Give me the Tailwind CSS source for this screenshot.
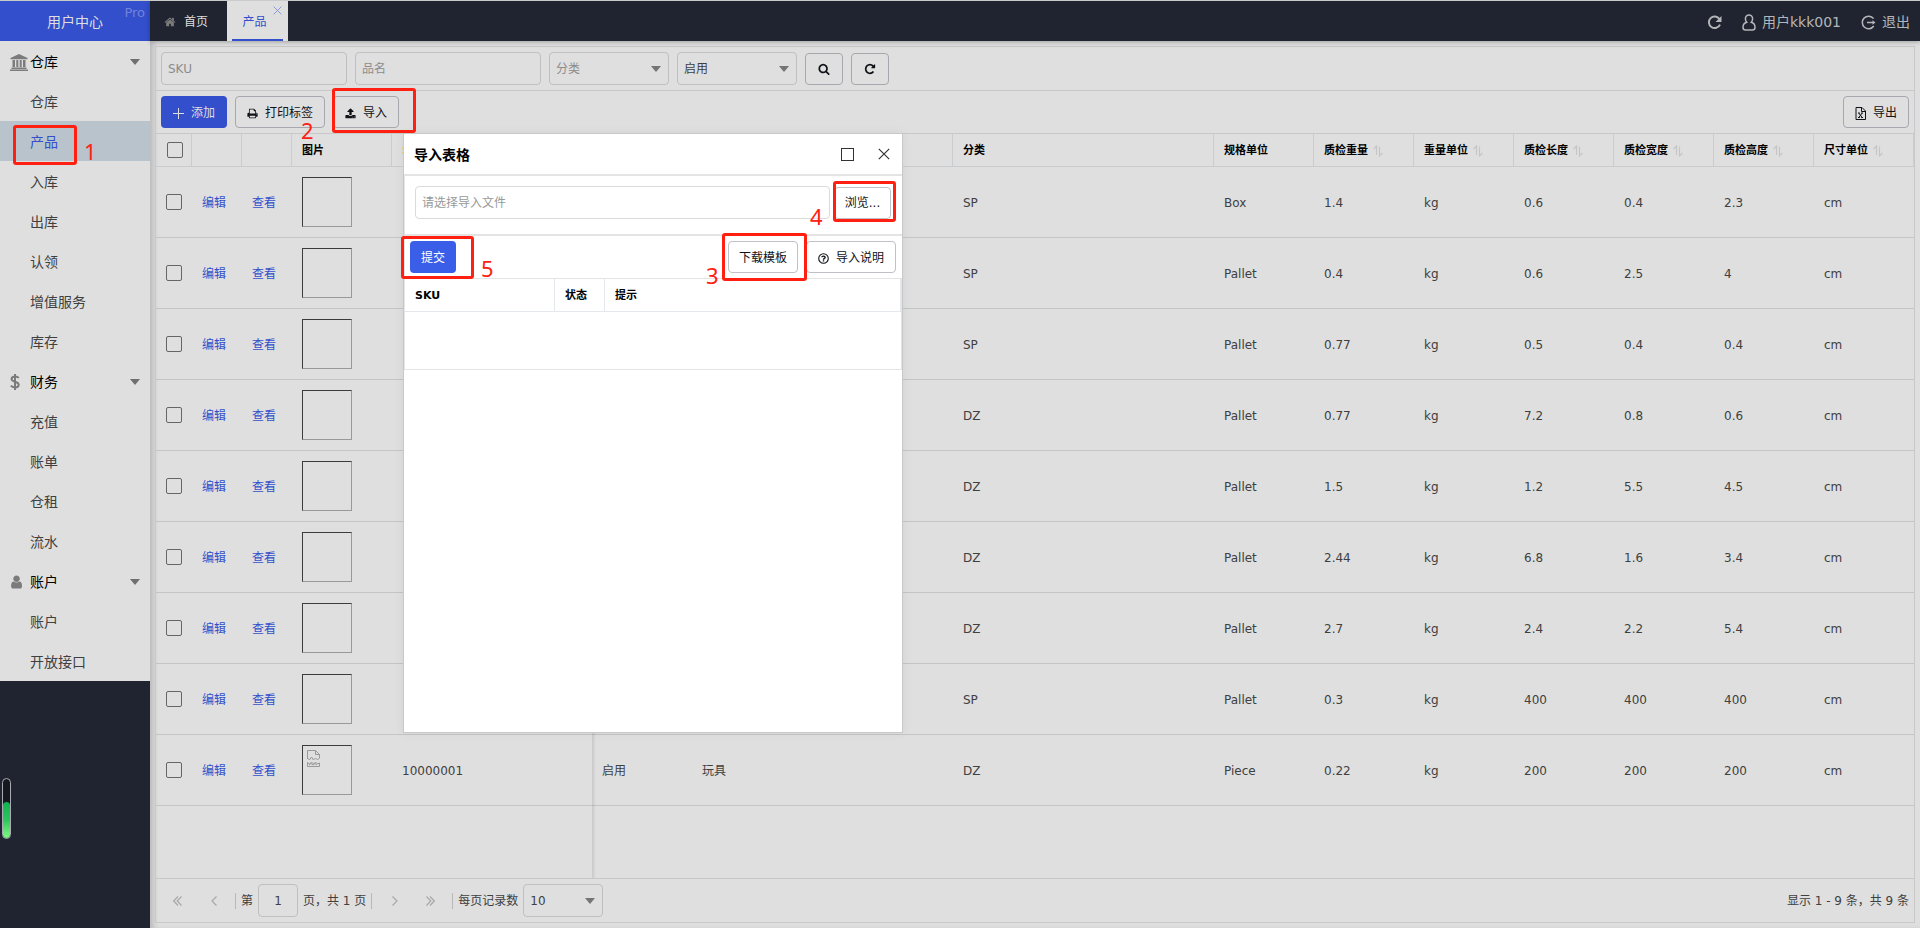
<!DOCTYPE html>
<html lang="zh-CN">
<head>
<meta charset="utf-8">
<title>用户中心 Pro - 产品</title>
<script src="https://cdn.jsdelivr.net/npm/@tailwindcss/browser@4"></script>
</head>
<body class="relative flex h-screen min-h-[928px] flex-col overflow-hidden border-t border-[#c8cbca] bg-[#dfdfdf] font-['DejaVu_Sans','Noto_Sans_CJK_SC',sans-serif] text-xs text-[#404040]">

<!-- icon sprite -->
<svg class="hidden" aria-hidden="true">
  <symbol id="home" viewBox="0 0 1792 1792"><path fill="currentColor" d="M1472 992v480q0 26-19 45t-45 19h-384v-384h-256v384h-384q-26 0-45-19t-19-45v-480q0-1 .5-3t.5-3l575-474 575 474q1 2 1 6zm223-69l-62 74q-8 9-21 11h-3q-13 0-21-7l-692-577-692 577q-12 8-24 7-13-2-21-11l-62-74q-8-10-7-23.500t11-21.500l719-599q32-26 76-26t76 26l244 204v-195q0-14 9-23t23-9h192q14 0 23 9t9 23v408l219 182q10 8 11 21.500t-7 23.500z"/></symbol>
  <symbol id="search" viewBox="0 0 1792 1792"><path fill="currentColor" d="M1216 832q0-185-131.500-316.500t-316.500-131.500-316.500 131.500-131.500 316.500 131.500 316.500 316.500 131.500 316.500-131.500 131.500-316.500zm512 832q0 52-38 90t-90 38q-54 0-90-38l-343-342q-179 124-399 124-143 0-273.500-55.500t-225-150-150-225-55.500-273.500 55.500-273.500 150-225 225-150 273.500-55.500 273.500 55.500 225 150 150 225 55.500 273.500q0 220-124 399l343 343q37 37 37 90z"/></symbol>
  <symbol id="repeat" viewBox="0 0 1792 1792"><path fill="currentColor" d="M1664 256v448q0 26-19 45t-45 19h-448q-42 0-59-40-17-39 14-69l138-138q-148-137-349-137-104 0-198.500 40.500t-163.500 109.500-109.500 163.500-40.500 198.500 40.500 198.500 109.500 163.500 163.500 109.500 198.500 40.500q119 0 225-52t179-147q7-10 23-12 15 0 25 9l137 138q9 8 9.500 20.500t-7.500 22.500q-109 132-264 204.500t-327 72.500q-156 0-298-61t-245-164-164-245-61-298 61-298 164-245 245-164 298-61q147 0 284.500 55.500t244.500 156.500l130-129q29-31 70-14 39 17 39 59z"/></symbol>
  <symbol id="upload" viewBox="0 0 1792 1792"><path fill="currentColor" d="M1344 1472q0-26-19-45t-45-19-45 19-19 45 19 45 45 19 45-19 19-45zm256 0q0-26-19-45t-45-19-45 19-19 45 19 45 45 19 45-19 19-45zm128-224v320q0 40-28 68t-68 28h-1472q-40 0-68-28t-28-68v-320q0-40 28-68t68-28h427q21 56 70.500 92t110.500 36h256q61 0 110.500-36t70.500-92h427q40 0 68 28t28 68zm-325-648q-17 40-59 40h-256v448q0 26-19 45t-45 19h-256q-26 0-45-19t-19-45v-448h-256q-42 0-59-40-17-39 14-69l448-448q18-19 45-19t45 19l448 448q31 30 14 69z"/></symbol>
  <symbol id="print" viewBox="0 0 1792 1792"><path fill="currentColor" d="M448 1536h896v-256h-896v256zm0-640h896v-384h-160q-40 0-68-28t-28-68v-160h-640v640zm1152 64q0-26-19-45t-45-19-45 19-19 45 19 45 45 19 45-19 19-45zm128 0v416q0 13-9.500 22.500t-22.500 9.500h-224v160q0 40-28 68t-68 28h-960q-40 0-68-28t-28-68v-160h-224q-13 0-22.500-9.500t-9.500-22.500v-416q0-79 56.500-135.500t135.500-56.500h64v-544q0-40 28-68t68-28h672q40 0 88 20t76 48l152 152q28 28 48 76t20 88v256h64q79 0 135.500 56.500t56.500 135.500z"/></symbol>
  <symbol id="user" viewBox="128 128 1408 1536"><path fill="currentColor" d="M1536 1399q0 109-62.500 187t-150.500 78h-854q-88 0-150.500-78t-62.500-187q0-85 8.500-160.500t31.500-152 58.500-131 94-89 134.500-34.500q131 128 313 128t313-128q76 0 134.500 34.500t94 89 58.500 131 31.500 152 8.500 160.500zm-256-887q0 159-112.500 271.500t-271.500 112.500-271.500-112.500-112.500-271.500 112.500-271.500 271.500-112.500 271.500 112.500 112.500 271.500z"/></symbol>
  <symbol id="bank" viewBox="0 0 18 17"><path fill="currentColor" d="M9 0 17.500 4v1.300H.500V4zM2.500 6H5v7H2.500zM6.300 6h2v7h-2zM9.700 6h2v7h-2zM13 6h2.500v7H13zM1.500 13.500h15V15h-15zM0 15.600h18V17H0z"/></symbol>
  <symbol id="dollar" viewBox="0 0 10 16"><path fill="none" stroke="currentColor" stroke-width="2" d="M5 0v16M8.800 4C8 3 6.500 2.600 5 2.600 3 2.600 1.600 3.600 1.600 5.100 1.600 8.500 8.700 7 8.700 10.700c0 1.700-1.600 2.700-3.700 2.700-1.700 0-3.200-.6-4.200-1.700"/></symbol>
  <symbol id="person" viewBox="0 0 14 17"><path fill="none" stroke="currentColor" stroke-width="1.500" d="M7 1a3.600 3.600 0 0 0-3.600 3.700c0 1.500.5 2.800 1.300 3.600C2.300 9 1 11 1 13.500c0 1.600 1 2.500 2.500 2.500h7c1.500 0 2.500-.9 2.500-2.500 0-2.500-1.300-4.500-3.700-5.200.8-.8 1.300-2.100 1.300-3.600A3.600 3.600 0 0 0 7 1z"/></symbol>
  <symbol id="exit" viewBox="0 0 15 15"><path fill="none" stroke="currentColor" stroke-width="1.500" d="M12.600 3.600A6.300 6.300 0 1 0 12.800 11M6 7.500h7"/><path fill="currentColor" d="M11.500 5.200 14.500 7.500l-3 2.300z"/></symbol>
  <symbol id="reload" viewBox="0 0 15 15"><path fill="none" stroke="currentColor" stroke-width="2" d="M12.500 4A5.800 5.800 0 1 0 13 9.600"/><path fill="currentColor" d="M14.500 1v6H8.500z"/></symbol>
  <symbol id="sort" viewBox="0 0 10 12"><path fill="none" stroke="currentColor" stroke-width="1.200" d="M3.500 10V1L.5 4M6.500 1.500V11l3-3"/></symbol>
  <symbol id="plus" viewBox="0 0 11 11"><path fill="none" stroke="currentColor" d="M5.500 0v11M0 5.500h11"/></symbol>
  <symbol id="cross" viewBox="0 0 12 12"><path fill="none" stroke="currentColor" stroke-width="1.200" d="m.8.800 10.400 10.400M11.200.8.800 11.200"/></symbol>
  <symbol id="excel" viewBox="0 0 11 13"><path fill="none" stroke="currentColor" d="M1 .5h6L10.500 4v8.500H1zM6.500.500V4.500h4M3.800 6l3.400 4.500M7.200 6 3.800 10.500M3 6h1.800M6.200 6H8M3 10.500h1.800M6.200 10.500H8"/></symbol>
  <symbol id="help" viewBox="0 0 12 12"><circle cx="6" cy="6" r="5.200" fill="none" stroke="currentColor" stroke-width="1.200"/><path fill="none" stroke="currentColor" stroke-width="1.500" d="M4.200 4.700C4.300 3 7.800 3 7.800 4.800 7.800 6 6 5.900 6 7.300M6 8v1.300"/></symbol>
  <symbol id="broken" viewBox="0 0 13 17"><path fill="none" stroke="currentColor" d="M.500 9V.500h8l4 4V8M8.500.500v4h4M.500 8l2 2 2-3 2 3 2-2 2 2 2-2M.500 16.500v-4l2 1.500 2-2 2 2 2-2 2 2 2-1v3.500zM2 15l2-1.500L6 15l2-1.500 2 1.500"/></symbol>
  <symbol id="prev" viewBox="0 0 6 10"><path fill="none" stroke="currentColor" stroke-width="1.200" d="M5.500.500 1 5l4.500 4.500"/></symbol>
  <symbol id="first" viewBox="0 0 9 10"><path fill="none" stroke="currentColor" stroke-width="1.200" d="M5 .500.700 5 5 9.500M8.500.500 4.200 5l4.300 4.500"/></symbol>
  <symbol id="down" viewBox="0 0 10 6"><path fill="currentColor" d="M0 0h10L5 6z"/></symbol>
</svg>

<div class="flex min-h-0 flex-1">
  <aside class="flex w-[150px] shrink-0 flex-col bg-[#1f2430]">
    <div class="relative flex h-10 shrink-0 items-center justify-center bg-[#334fcb] pt-0.5 text-sm text-[#dfdfdf]">
      <span>用户中心</span>
      <span class="absolute top-1 right-[5px] text-[13px] leading-4 text-[#7183dc]">Pro</span>
    </div>
    <nav id="nav" class="flex flex-col bg-[#dfdfdf] text-sm" aria-label="主菜单"></nav>
  </aside>

  <div class="flex min-w-0 flex-1 flex-col">
    <header class="z-10 flex h-10 shrink-0 items-stretch bg-[#1f2430] shadow-[0_1px_5px_rgba(0,0,0,0.25)]">
      <a href="#" class="flex w-[77px] items-center gap-2 pt-0.5 pl-[14px] text-[#dfdfdf]"><svg class="size-3 text-[#7b7b7b]"><use href="#home"/></svg>首页</a>
      <div class="relative flex w-[61px] bg-[#dfdfdf] px-[5px]">
        <a href="#" class="flex flex-1 items-center justify-center border-b-2 border-[#334fcb] pt-1 pr-1.5 text-[#334fcb]">产品</a>
        <button aria-label="关闭" class="absolute top-[5px] right-[6px] text-[#8492d6]"><svg class="size-[9px]"><use href="#cross"/></svg></button>
      </div>
      <div class="ml-auto flex items-center gap-5 pt-0.5 pr-[10px] text-sm text-[#b4b6b9]">
        <button aria-label="刷新"><svg class="size-[15px]"><use href="#reload"/></svg></button>
        <a href="#" class="flex items-center gap-1.5"><svg class="h-[17px] w-[14px]"><use href="#person"/></svg>用户kkk001</a>
        <a href="#" class="flex items-center gap-1.5"><svg class="size-[15px]"><use href="#exit"/></svg>退出</a>
      </div>
    </header>

    <main class="flex min-h-0 flex-1 flex-col bg-[#dfdfdf] p-[5px] shadow-[inset_6px_0_6px_-3px_rgba(0,0,0,0.18)]">
      <div class="flex min-h-0 flex-1 flex-col border border-[#c8c8c8]">
        <form class="flex h-11 shrink-0 items-center gap-2 border-b border-[#c8c8c8] px-[5px]" onsubmit="return false">
          <input aria-label="SKU" placeholder="SKU" class="h-[33px] w-[186px] rounded-[4px] border border-[#bfbfbf] px-1.5 placeholder:text-[#8c8c8c]">
          <input aria-label="品名" placeholder="品名" class="h-[33px] w-[186px] rounded-[4px] border border-[#bfbfbf] px-1.5 placeholder:text-[#8c8c8c]">
          <div class="relative">
            <select aria-label="分类" class="h-[33px] w-[120px] appearance-none rounded-[4px] border border-[#bfbfbf] px-1.5 text-[#8c8c8c]"><option>分类</option></select>
            <svg class="pointer-events-none absolute top-[14px] right-2 h-1.5 w-2.5 text-[#757575]"><use href="#down"/></svg>
          </div>
          <div class="relative">
            <select aria-label="状态" class="h-[33px] w-[120px] appearance-none rounded-[4px] border border-[#bfbfbf] px-1.5"><option>启用</option></select>
            <svg class="pointer-events-none absolute top-[14px] right-2 h-1.5 w-2.5 text-[#757575]"><use href="#down"/></svg>
          </div>
          <button aria-label="搜索" class="flex h-8 w-[38px] items-center justify-center rounded-[4px] border border-[#a6a8ad] text-[#101218]"><svg class="size-3"><use href="#search"/></svg></button>
          <button aria-label="重置" class="flex h-8 w-[38px] items-center justify-center rounded-[4px] border border-[#a6a8ad] text-[#101218]"><svg class="size-3"><use href="#repeat"/></svg></button>
        </form>
        <div class="flex h-[43px] shrink-0 items-center gap-2 border-b border-[#c8c8c8] px-[5px] text-[#101218]">
          <button class="flex h-8 w-[66px] items-center justify-center gap-[7px] rounded-[4px] bg-[#334fcb] pt-0.5 text-[#dfdfdf]"><svg class="size-[11px]"><use href="#plus"/></svg>添加</button>
          <button class="flex h-8 w-[90px] items-center justify-center gap-[7px] rounded-[4px] border border-[#a6a8ad] pt-0.5"><svg class="size-[11px]"><use href="#print"/></svg>打印标签</button>
          <button class="flex h-8 w-[66px] items-center justify-center gap-[7px] rounded-[4px] border border-[#a6a8ad] pt-0.5"><svg class="size-[11px]"><use href="#upload"/></svg>导入</button>
          <button class="ml-auto flex h-8 w-[66px] items-center justify-center gap-[7px] rounded-[4px] border border-[#a6a8ad] pt-0.5"><svg class="h-[13px] w-[11px]"><use href="#excel"/></svg>导出</button>
        </div>

        <div class="relative min-h-0 flex-1 overflow-hidden">
          <table class="w-full table-fixed border-separate border-spacing-0 text-left">
            <colgroup>
              <col class="w-[36px]"><col class="w-[50px]"><col class="w-[50px]"><col class="w-[100px]"><col class="w-[200px]"><col class="w-[100px]"><col><col>
              <col class="w-[100px]"><col class="w-[100px]"><col class="w-[100px]"><col class="w-[100px]"><col class="w-[100px]"><col class="w-[100px]"><col class="w-[100px]">
            </colgroup>
            <thead><tr id="head"></tr></thead>
            <tbody id="rows"></tbody>
          </table>
          <!-- edge of the frozen columns -->
          <div class="absolute inset-y-0 left-[436px] w-1 bg-linear-to-r from-black/10 to-transparent"></div>
        </div>

        <footer class="flex h-11 shrink-0 items-center justify-between border-t border-[#c8c8c8] pr-[5px] pl-[17px]">
          <div class="flex items-center">
            <button aria-label="首页" class="flex w-[38px] text-[#a8a8a8]"><svg class="h-2.5 w-[9px]"><use href="#first"/></svg></button>
            <button aria-label="上一页" class="flex w-6 text-[#a8a8a8]"><svg class="h-2.5 w-1.5"><use href="#prev"/></svg></button>
            <label class="flex h-4 items-center gap-[5px] border-l border-[#b8b8b8] pl-[5px]">第
              <input value="1" class="h-[33px] w-10 rounded-[4px] border border-[#bfbfbf] text-center"></label>
            <span class="flex h-4 items-center border-r border-[#b8b8b8] px-[5px] whitespace-nowrap">页，共 1 页</span>
            <button aria-label="下一页" class="flex w-[54px] pl-5 text-[#a8a8a8]"><svg class="h-2.5 w-1.5 rotate-180"><use href="#prev"/></svg></button>
            <button aria-label="末页" class="flex w-[26px] text-[#a8a8a8]"><svg class="h-2.5 w-[9px] rotate-180"><use href="#first"/></svg></button>
            <label for="size" class="flex h-4 items-center border-l border-[#b8b8b8] px-[5px]">每页记录数</label>
            <div class="relative">
              <select id="size" class="h-[33px] w-20 appearance-none rounded-[4px] border border-[#bfbfbf] px-1.5"><option>10</option></select>
              <svg class="pointer-events-none absolute top-[14px] right-2 h-1.5 w-2.5 text-[#757575]"><use href="#down"/></svg>
            </div>
          </div>
          <span>显示 1 - 9 条，共 9 条</span>
        </footer>
      </div>
    </main>
  </div>
</div>

<!-- floating level gauge -->
<div class="absolute top-[777px] left-[2px] flex h-[61px] w-[9px] flex-col justify-end overflow-hidden rounded-full border border-[#a9adb3] bg-[#15181f]">
  <div class="h-9 rounded-full bg-linear-to-b from-[#12b153] via-[#2bc55c] to-[#7dfb84]"></div>
</div>

<!-- import dialog -->
<section role="dialog" aria-label="导入表格" class="absolute top-[132px] left-[403px] z-20 flex h-[600px] w-[500px] flex-col border border-[#c8c8c8] bg-white text-[#101218] shadow-[0_0_10px_rgba(0,0,0,0.06)]">
  <div class="flex h-[42px] shrink-0 items-center border-b-2 border-[#e4e4e4] pr-3 pl-[10px]">
    <h2 class="flex-1 pt-0.5 text-sm font-bold text-black">导入表格</h2>
    <button aria-label="最大化" class="mr-6 size-[13px] border border-[#333333]"></button>
    <button aria-label="关闭" class="text-[#333333]"><svg class="size-3"><use href="#cross"/></svg></button>
  </div>
  <div class="flex h-[60px] shrink-0 items-start gap-1 border-b-2 border-l border-[#e4e4e4] pt-[10px] pr-[11px] pl-[10px]">
    <input aria-label="导入文件" placeholder="请选择导入文件" class="h-[33px] min-w-0 flex-1 rounded-[4px] border border-[#dadada] px-1.5 placeholder:text-[#999999]">
    <button class="mt-px h-8 w-[57px] rounded-[4px] border border-[#bfc1c6]">浏览...</button>
  </div>
  <div class="flex h-[43px] shrink-0 items-center gap-2 border-b border-l border-[#e4e4e4] pr-1.5 pl-[5px]">
    <button class="h-8 w-[46px] rounded-[4px] bg-[#3b5ee8] pt-0.5 text-white">提交</button>
    <button class="ml-auto h-8 w-[70px] rounded-[4px] border border-[#bfc1c6] pt-0.5">下载模板</button>
    <button class="flex h-8 w-[90px] items-center justify-center gap-[7px] rounded-[4px] border border-[#bfc1c6] pt-0.5"><svg class="size-[11px]"><use href="#help"/></svg>导入说明</button>
  </div>
  <div class="h-[91px] shrink-0 border-x border-b border-[#e4e4e4]">
    <table class="w-full table-fixed border-separate border-spacing-0 text-left text-[11px] text-black">
      <colgroup><col class="w-[150px]"><col class="w-[50px]"><col></colgroup>
      <thead><tr>
        <th class="h-[33px] border-r border-b border-[#e4e8ec] pt-0.5 pl-[10px]">SKU</th>
        <th class="h-[33px] border-r border-b border-[#e4e8ec] pt-0.5 pl-[10px]">状态</th>
        <th class="h-[33px] border-r border-b border-[#e4e8ec] pt-0.5 pl-[10px]">提示</th>
      </tr></thead>
    </table>
  </div>
</section>

<!-- step markers -->
<div class="pointer-events-none absolute inset-0 z-30 font-['Noto_Sans',sans-serif] text-[22px] leading-6 text-[#ff2012]">
  <div class="absolute top-[124px] left-[13px] h-10 w-16 rounded-[3px] border-3 border-[#ff2012]"></div>
  <span class="absolute top-[138px] left-[84px]">1</span>
  <div class="absolute top-[87px] left-[332px] h-[45px] w-[84px] rounded-[3px] border-3 border-[#ff2012]"></div>
  <span class="absolute top-[117px] left-[301px]">2</span>
  <div class="absolute top-[232px] left-[722px] h-12 w-[85px] rounded-[3px] border-3 border-[#ff2012]"></div>
  <span class="absolute top-[262px] left-[706px]">3</span>
  <div class="absolute top-[180px] left-[833px] h-[41px] w-[63px] rounded-[3px] border-3 border-[#ff2012]"></div>
  <span class="absolute top-[203px] left-[810px]">4</span>
  <div class="absolute top-[235px] left-[401px] h-[43px] w-[73px] rounded-[3px] border-3 border-[#ff2012]"></div>
  <span class="absolute top-[255px] left-[481px]">5</span>
</div>

<script>
const menu = [
  ['仓库', 'bank', ['仓库', '产品', '入库', '出库', '认领', '增值服务', '库存']],
  ['财务', 'dollar', ['充值', '账单', '仓租', '流水']],
  ['账户', 'user', ['账户', '开放接口']]
];
const iconClass = { bank: 'h-[17px] w-[18px]', dollar: 'h-4 w-[10px]', user: 'h-[14px] w-3' };
document.getElementById('nav').innerHTML = menu.map(([title, icon, items]) =>
  `<button class="flex h-10 items-center px-[10px] pt-0.5 text-black"><span class="flex w-5 shrink-0 text-[#7b7b7b]"><svg class="${iconClass[icon]}"><use href="#${icon}"/></svg></span><span class="flex-1 text-left">${title}</span><svg class="h-1.5 w-2.5 text-[#6f6f6f]"><use href="#down"/></svg></button>` +
  items.map(t => t === '产品'
    ? `<a href="#" class="flex h-10 items-center bg-[#b8c3cc] pt-0.5 pl-[30px] text-[#334fcb]">${t}</a>`
    : `<a href="#" class="flex h-10 items-center pt-0.5 pl-[30px] text-[#404040]">${t}</a>`).join('')
).join('');

const box = '<input type="checkbox" aria-label="选择" class="block size-4 appearance-none rounded-[2px] border border-[#666666]">';
const heads = ['', '', '图片', 'SKU', '状态', '品名', '分类', '规格单位', '质检重量↕', '重量单位↕', '质检长度↕', '质检宽度↕', '质检高度↕', '尺寸单位↕'];
document.getElementById('head').innerHTML =
  `<th class="h-[33px] border-r border-b border-[#cacdd0] pl-[11px]">${box}</th>` +
  heads.map(h => `<th class="h-[33px] border-r border-b border-[#cacdd0] pt-0.5 pl-[10px] text-[11px] ${h === 'SKU' ? 'text-[#e08a1e]' : 'text-black'}"><span class="flex items-center gap-[5px]">${h.replace('↕', '')}${h.includes('↕') ? '<svg class="h-3 w-2.5 text-[#c6c6c6]"><use href="#sort"/></svg>' : ''}</span></th>`).join('');

const data = [
  ['', '', '', 'SP', 'Box', '1.4', 'kg', '0.6', '0.4', '2.3', 'cm'],
  ['', '', '', 'SP', 'Pallet', '0.4', 'kg', '0.6', '2.5', '4', 'cm'],
  ['', '', '', 'SP', 'Pallet', '0.77', 'kg', '0.5', '0.4', '0.4', 'cm'],
  ['', '', '', 'DZ', 'Pallet', '0.77', 'kg', '7.2', '0.8', '0.6', 'cm'],
  ['', '', '', 'DZ', 'Pallet', '1.5', 'kg', '1.2', '5.5', '4.5', 'cm'],
  ['', '', '', 'DZ', 'Pallet', '2.44', 'kg', '6.8', '1.6', '3.4', 'cm'],
  ['', '', '', 'DZ', 'Pallet', '2.7', 'kg', '2.4', '2.2', '5.4', 'cm'],
  ['', '', '', 'SP', 'Pallet', '0.3', 'kg', '400', '400', '400', 'cm'],
  ['10000001', '启用', '玩具', 'DZ', 'Piece', '0.22', 'kg', '200', '200', '200', 'cm']
];
const td = (html) => `<td class="h-[71px] border-b border-[#c4c4c4] pt-0.5 pl-[10px]">${html}</td>`;
document.getElementById('rows').innerHTML = data.map(r =>
  '<tr>' + `<td class="h-[71px] border-b border-[#c4c4c4] pl-[10px]">${box}</td>` +
  td('<a href="#" class="text-[#334fcb]">编辑</a>') + td('<a href="#" class="text-[#334fcb]">查看</a>') +
  `<td class="h-[71px] border-b border-[#c4c4c4] pl-[10px]"><div class="size-[50px] border border-t-[#3c3c3c] border-r-[#999999] border-b-[#999999] border-l-[#3c3c3c] p-1 text-[#999999]">${r[0] ? '<svg class="h-[17px] w-[13px]"><use href="#broken"/></svg>' : ''}</div></td>` +
  r.map(td).join('') + '</tr>').join('');
</script>
</body>
</html>
